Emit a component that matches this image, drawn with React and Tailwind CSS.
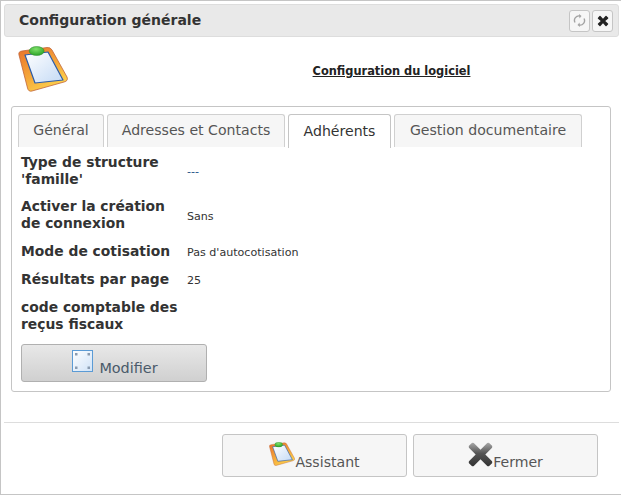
const tabs = [
  ["Général", "w-[86px]", false],
  ["Adresses et Contacts", "w-[178px]", false],
  ["Adhérents", "w-[103px]", true],
  ["Gestion documentaire", "w-[188px]", false],
];

const rows = [
  ["Type de structure 'famille'", "---", "h-[44px]", "text-[#1d4f86] pt-[3px]"],
  ["Activer la création de connexion", "Sans", "h-[44px]", "text-[#333] pt-[4px]"],
  ["Mode de cotisation", "Pas d'autocotisation", "h-[29px]", "text-[#333] pt-[3px]"],
  ["Résultats par page", "25", "h-[27px]", "text-[#333] pt-[3px]"],
  ["code comptable des reçus fiscaux", "", "h-[46px]", "text-[#333] pt-[3px]"],
];

function Clipboard({ w = 50, h = 46, id = "a" }) {
  return (
    <svg width={w} height={h} viewBox="0 0 50 46" className="shrink-0">
      <defs>
        <linearGradient id={`cbo${id}`} x1="0" y1="0" x2="0.6" y2="1">
          <stop offset="0" stopColor="#e8702a" />
          <stop offset="0.6" stopColor="#f5a83a" />
          <stop offset="1" stopColor="#fcd14c" />
        </linearGradient>
        <linearGradient id={`cbp${id}`} x1="0" y1="0" x2="1" y2="1">
          <stop offset="0" stopColor="#ffffff" />
          <stop offset="1" stopColor="#c4daf5" />
        </linearGradient>
        <radialGradient id={`cbg${id}`} cx="0.45" cy="0.3" r="0.8">
          <stop offset="0" stopColor="#7fe06a" />
          <stop offset="1" stopColor="#1f9a1f" />
        </radialGradient>
      </defs>
      <path d="M1 9 Q0 5.500 4 5 L29 1.500 Q32.500 1 34 4 L49 31 Q50.500 35 46 36 L14 45 Q10.500 46 9.500 42 Z" fill={`url(#cbo${id})`} stroke="#c0653a" strokeWidth="0.800" />
      <path d="M7 9 L30 6 L45 34 L17 37 Z" fill={`url(#cbp${id})`} stroke="#2c5ca8" strokeWidth="1.200" strokeLinejoin="round" />
      <ellipse cx="18.700" cy="5" rx="7.500" ry="4.500" fill={`url(#cbg${id})`} stroke="#2b8a2b" strokeWidth="0.500" />
    </svg>
  );
}

function CloseX({ size, fill = "#222" }) {
  return (
    <svg width={size} height={size} viewBox="0 0 24 24">
      <path d="M7 2 L12 7.500 L17 2 Q18 1.200 19 2 L22.500 5.500 Q23 6.500 22 7.500 L16.500 12 L22 17 Q23 18 22 19 L19 22 Q18 23 17 22 L12 16.500 L7 22 Q6 23 5 22 L2 19 Q1 18 2 17 L7.500 12 L2 7.500 Q1 6.500 2 5.500 L5 2 Q6 1.200 7 2 Z" fill={fill} />
    </svg>
  );
}

function BigX() {
  return (
    <svg width="25" height="25" viewBox="0 0 26 26" className="shrink-0">
      <defs>
        <linearGradient id="bx" x1="0" y1="0" x2="0" y2="1">
          <stop offset="0" stopColor="#a8a8a8" />
          <stop offset="0.45" stopColor="#555" />
          <stop offset="1" stopColor="#333" />
        </linearGradient>
      </defs>
      <path d="M6 1 L13 8 L20 1 Q21 0.500 22 1 L25 4 Q25.500 5 25 6 L18 13 L25 20 Q25.500 21 25 22 L22 25 Q21 25.500 20 25 L13 18 L6 25 Q5 25.500 4 25 L1 22 Q0.500 21 1 20 L8 13 L1 6 Q0.500 5 1 4 L4 1 Q5 0.500 6 1 Z" fill="url(#bx)" />
    </svg>
  );
}

function Refresh() {
  return (
    <svg width="13" height="15" viewBox="0 0 13 14" fill="none" stroke="#a3a3a3" strokeWidth="1.400">
      <path d="M2 9 A4.500 4.500 0 0 1 7 2.500" />
      <path d="M6 0.500 L8.500 2.500 L6.500 5" fill="#a3a3a3" stroke="none" />
      <path d="M11 5 A4.500 4.500 0 0 1 6 11.500" />
      <path d="M7 13.500 L4.500 11.500 L6.500 9" fill="#a3a3a3" stroke="none" />
    </svg>
  );
}

function Frame() {
  return (
    <svg width="21" height="22" viewBox="0 0 21 22" className="ml-[1px] shrink-0">
      <defs>
        <linearGradient id="fr" x1="0" y1="0" x2="1" y2="1">
          <stop offset="0" stopColor="#ffffff" />
          <stop offset="1" stopColor="#cfe2f7" />
        </linearGradient>
      </defs>
      <rect x="0.500" y="0.500" width="20" height="21" fill="url(#fr)" stroke="#5b9bd5" />
      <g fill="#8a9bb0">
        <rect x="3" y="3" width="2.500" height="2.500" />
        <rect x="15.500" y="3" width="2.500" height="2.500" />
        <rect x="3" y="16.500" width="2.500" height="2.500" />
        <rect x="15.500" y="16.500" width="2.500" height="2.500" />
      </g>
    </svg>
  );
}

export default function App() {
  return (
    <div className="w-[621px] h-[495px] bg-white font-['DejaVu_Sans',sans-serif] text-[#333] border border-[#c5c5c5] border-r-0 pt-[3px] pl-[3px] pr-[2px] flex flex-col overflow-hidden">
      <div className="h-[33px] shrink-0 bg-[#e9e9e9] border border-[#dddddd] rounded-[3px] flex items-center justify-between pl-[14px] pr-[5px]">
        <span className="font-bold text-[14px] text-[#333]">Configuration générale</span>
        <div className="flex gap-[2px]">
          <div className="w-[21px] h-[22px] bg-[#f6f6f6] border border-[#c5c5c5] rounded-[3px] flex items-center justify-center"><Refresh /></div>
          <div className="w-[21px] h-[22px] bg-[#f6f6f6] border border-[#c5c5c5] rounded-[3px] flex items-center justify-center"><CloseX size={12} /></div>
        </div>
      </div>

      <div className="h-[69px] shrink-0 flex items-start pl-[14px] pt-[9px]">
        <Clipboard id="a" />
        <div className="flex-1 text-center pt-[12px] pl-[96px]">
          <span className="font-bold text-[11.4px] underline text-[#222]">Configuration du logiciel</span>
        </div>
      </div>

      <div className="ml-[7px] h-[286px] shrink-0 border border-[#c5c5c5] rounded-[3px] pl-[6px] pt-[7px] w-[600px]">
        <div className="flex gap-[3px] h-[34px]">
          {tabs.map(([label, w, active]) => (
            <div
              key={label}
              className={`${w} ${active ? "bg-white text-[#333] border-[#c5c5c5] h-[34px]" : "bg-[#f6f6f6] text-[#555] border-[#d0d0d0] h-[33px]"} border border-b-0 rounded-t-[3px] flex items-center justify-center text-[14.1px]`}
            >
              {label}
            </div>
          ))}
        </div>
        <div className="pl-[3px] pt-[1px]">
          {rows.map(([label, value, h, color]) => (
            <div key={label} className={`${h} flex items-center`}>
              <div className="w-[166px] font-bold text-[13.86px] leading-[17px] text-[#333]">{label}</div>
              <div className={`text-[11.1px] ${color}`}>{value}</div>
            </div>
          ))}
          <button className="w-[186px] h-[38px] mt-[5px] bg-gradient-to-b from-[#e8e8e8] to-[#d0d0d0] border border-[#b0b0b0] rounded-[3px] flex items-start justify-center pt-[5px] pl-[1px] text-[14.4px] text-[#4a5a6a]">
            <Frame />
            <span className="ml-[6px] mt-[8px]">Modifier</span>
          </button>
        </div>
      </div>

      <div className="mt-[30px] h-px w-[615px] shrink-0 bg-[#dddddd]" />

      <div className="flex pl-[218px] gap-[6px] mt-[11px]">
        <button className="w-[185px] h-[43px] bg-[#f6f6f6] border border-[#c5c5c5] rounded-[3px] flex items-start justify-center pt-[7px] text-[14.1px] text-[#555]">
          <Clipboard w={26} h={24} id="b" />
          <span className="mt-[10px]">Assistant</span>
        </button>
        <button className="w-[185px] h-[43px] bg-[#f6f6f6] border border-[#c5c5c5] rounded-[3px] flex items-start justify-center pt-[7px] text-[14.1px] text-[#555]">
          <BigX />
          <span className="mt-[10px]">Fermer</span>
        </button>
      </div>
    </div>
  );
}
